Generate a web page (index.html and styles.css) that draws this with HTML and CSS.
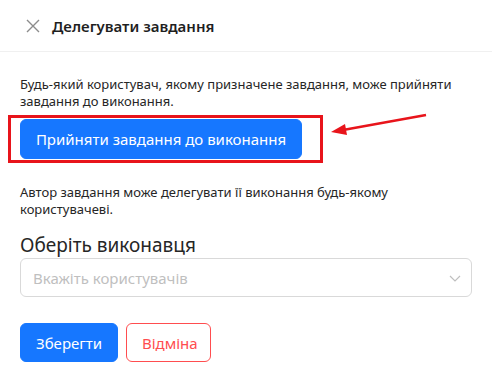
FILE: index.html
```html
<!DOCTYPE html>
<html lang="uk">

<head>
    <meta charset="UTF-8">
    <meta name="viewport" content="width=device-width, initial-scale=1.0">
    <title>Делегувати завдання</title>
    <link rel="stylesheet" href="styles.css">
</head>

<body>

    <div class="header">
        <svg class="close" width="14" height="14" viewBox="0 0 14 14">
            <path d="M1 1 L13 13 M13 1 L1 13" stroke="#8c8c8c" stroke-width="1.4" fill="none" />
        </svg>
        <h1>Делегувати завдання</h1>
    </div>

    <div class="content">
        <p class="text">Будь-який користувач, якому призначене завдання, може прийняти завдання до виконання.</p>
        <div class="accept-row">
            <div class="mark">
                <button class="btn primary big">Прийняти завдання до виконання</button>
            </div>
            <svg class="arrow" width="100" height="24" viewBox="0 0 100 24">
                <path d="M97 2 L14 17" stroke="#e8141b" stroke-width="2.5" fill="none" />
                <path d="M2 19 L16 11 L18 22 Z" fill="#e8141b" />
            </svg>
        </div>

        <p class="text second">Автор завдання може делегувати її виконання будь-якому користувачеві.</p>

        <div class="label">Оберіть виконавця</div>
        <div class="select">
            <span class="placeholder">Вкажіть користувачів</span>
            <svg width="12" height="12" viewBox="0 0 12 12">
                <path d="M1 4 L6 9 L11 4" stroke="#bfbfbf" stroke-width="1.2" fill="none" />
            </svg>
        </div>

        <div class="actions">
            <button class="btn primary">Зберегти</button>
            <button class="btn danger">Відміна</button>
        </div>
    </div>

</body>

</html>
```

FILE: styles.css
```css
body {
    margin: 0;
    font-family: "Noto Sans", "Open Sans", sans-serif;
    color: #262626;
    background: #fff;
}

.header {
    display: flex;
    align-items: center;
    height: 52px;
    padding-left: 26px;
    border-bottom: 1px solid #f0f0f0;
    box-sizing: border-box;
}

.close {
    margin-right: 12px;
}

.header h1 {
    margin: 0;
    font-size: 15px;
    font-weight: 600;
    color: #1f1f1f;
}

.content {
    padding: 24px 20px 0 20px;
}

.text {
    margin: 0;
    font-size: 13px;
    line-height: 17px;
    color: #262626;
}

.accept-row {
    display: flex;
    align-items: flex-start;
    margin: 5px 0 0 -12px;
}

.mark {
    border: 3px solid #e8141b;
    padding: 1px 18px 0 9px;
    height: 41px;
}

.arrow {
    margin-left: 6px;
    margin-top: -2px;
}

.btn {
    font-family: "Noto Sans", "Open Sans", sans-serif;
    font-size: 15px;
    border-radius: 6px;
    cursor: pointer;
    height: 39px;
    padding: 0 15px;
    white-space: nowrap;
}

.primary {
    background: #1677ff;
    border: 1px solid #1677ff;
    color: #fff;
}

.big {
    width: 282px;
    height: 40px;
    padding: 0;
}

.second {
    margin-top: 21px;
}

.label {
    margin-top: 14px;
    font-size: 19px;
    line-height: 26px;
    color: #262626;
}

.select {
    display: flex;
    justify-content: space-between;
    align-items: center;
    height: 39px;
    border: 1px solid #d9d9d9;
    border-radius: 6px;
    padding: 0 10px 0 12px;
    box-sizing: border-box;
}

.placeholder {
    font-size: 15px;
    color: #bfbfbf;
}

.actions {
    display: flex;
    gap: 8px;
    margin-top: 26px;
}

.danger {
    background: #fff;
    border: 1px solid #ff4d4f;
    color: #ff4d4f;
    width: 85px;
}

.actions .primary {
    width: 98px;
}
```
